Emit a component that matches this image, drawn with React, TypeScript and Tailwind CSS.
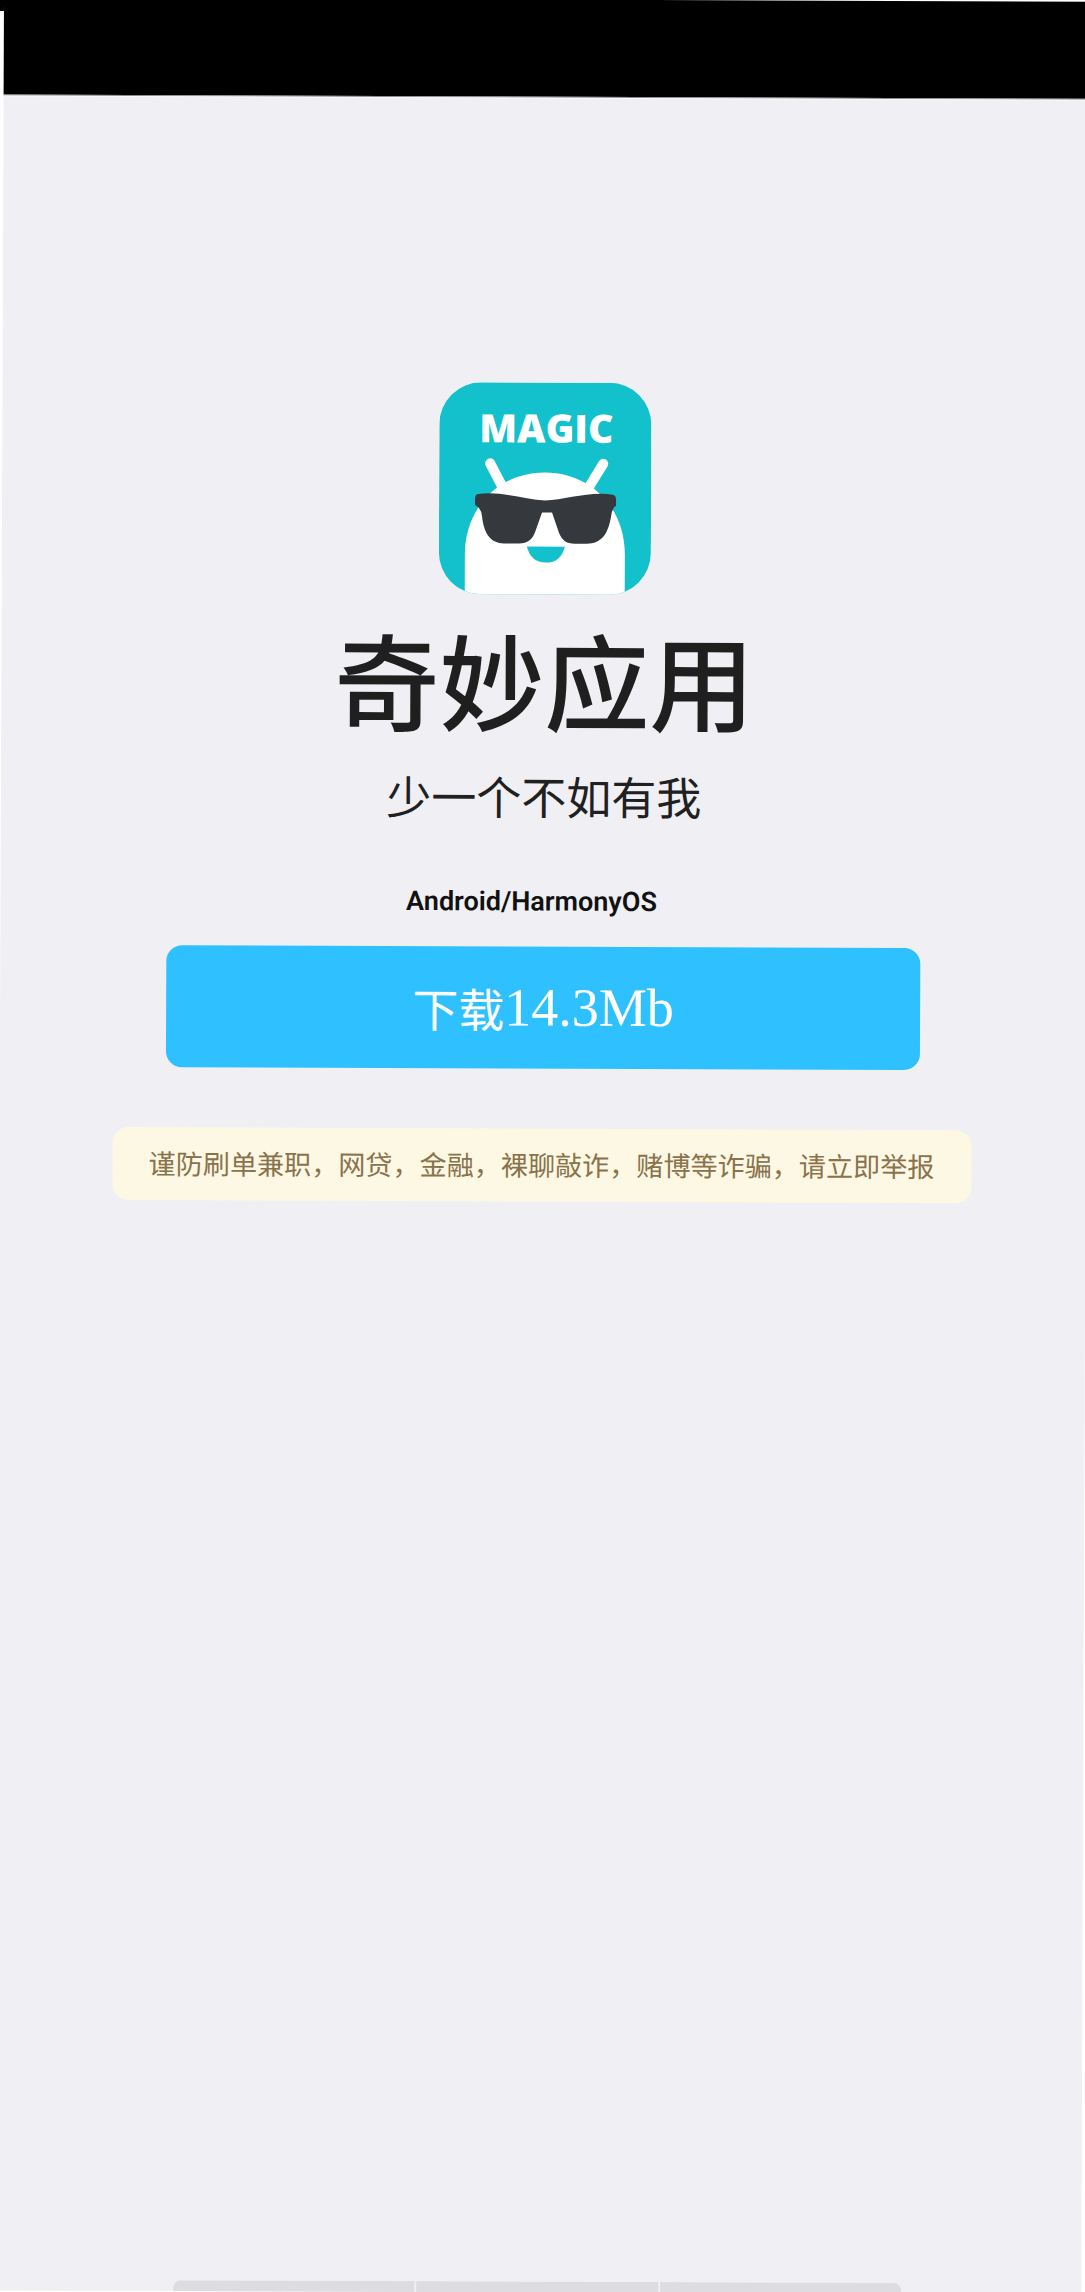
import React from "react";

// App icon: teal tile with the sunglasses robot
const MagicIcon = () => (
  <svg viewBox="0 0 212 212" className="h-[212px] w-[212px] rounded-[42px]">
    <rect width="212" height="212" fill="#13c1cd" />
    <text
      x="107"
      y="60"
      textAnchor="middle"
      fill="#ffffff"
      fontFamily="Open Sans, sans-serif"
      fontWeight="800"
      fontSize="39"
      textLength="134"
      lengthAdjust="spacingAndGlyphs"
    >
      MAGIC
    </text>
    <path d="M51 81 L63 104 M164 81 L150 104" stroke="#ffffff" strokeWidth="10" strokeLinecap="round" />
    <path d="M26 212 V172 C26 125 60 90 106 90 C152 90 186 125 186 172 V212 Z" fill="#ffffff" />
    <path
      d="M38 112 C60 108 85 117 106 118 C127 117 152 108 174 112 Q177 113 177 117 V123 Q173 125 172 134 C169 152 162 161 148 161 L136 161 C127 161 123 157 120 150 L113 130 H103 L96 150 C93 157 89 161 80 161 L65 161 C52 161 45 152 43 134 Q42 125 36 123 V117 Q36 113 38 112 Z"
      fill="#35383c"
    />
    <path d="M88 164 H126 Q122 180 107 180 Q92 180 88 164 Z" fill="#13c1cd" />
  </svg>
);

const App = () => {
  return (
    <div className="h-[2292px] w-[1085px] overflow-hidden bg-white relative">
      <div className="absolute left-0 top-0 h-[11px] w-[5px] bg-black" />
      <div className="flex h-[2293px] w-[1086px] origin-top-left translate-x-[4px] -translate-y-[2.5px] rotate-[0.22deg] flex-col items-center bg-[#efeff4]">
        <div className="h-[97px] w-full shrink-0 bg-black" />
        <div className="h-[1px] w-full shrink-0 bg-[#8a8a8a]" />
        <div className="h-[1px] w-full shrink-0 bg-[#f9f9fb]" />

        <div className="mt-[284px]">
          <MagicIcon />
        </div>

        <h1 className="mt-[23px] h-[120px] text-[105px] leading-[120px] font-medium text-[#1f1f1f] [font-family:'Noto_Sans_CJK_SC',sans-serif]">
          奇妙应用
        </h1>
        <p className="mt-[28px] h-[60px] text-[45px] leading-[60px] text-[#202020] [font-family:'Noto_Sans_CJK_SC',sans-serif]">
          少一个不如有我
        </p>
        <p className="mt-[59px] mr-[24px] h-[34px] text-[27px] leading-[34px] font-semibold text-[#111111] [font-family:Roboto,sans-serif]">
          Android/HarmonyOS
        </p>

        <button className="mt-[28px] flex h-[122px] w-[754px] shrink-0 items-center justify-center rounded-[16px] bg-[#2fc1ff] text-white">
          <span className="text-[46px] [font-family:'Noto_Sans_CJK_SC',sans-serif]">下载</span>
          <span className="text-[54px] [font-family:'Liberation_Serif',serif]">14.3Mb</span>
        </button>

        <div className="mt-[60px] mr-[2px] flex h-[73px] w-[859px] shrink-0 items-center justify-center rounded-[16px] bg-[#fdf8e4] text-[27.1px] text-[#8a734c] [font-family:'Noto_Sans_CJK_SC',sans-serif]">
          谨防刷单兼职，网贷，金融，裸聊敲诈，赌博等诈骗，请立即举报
        </div>

        {/* home bar strip at the very bottom */}
        <div className="mt-auto mr-[2px] flex h-[11px] w-[728px] shrink-0 gap-[2px] overflow-hidden rounded-t-[8px]">
          <div className="flex-1 bg-[#dcdce1]" />
          <div className="flex-1 bg-[#dcdce1]" />
          <div className="flex-1 bg-[#dcdce1]" />
        </div>
      </div>
    </div>
  );
};

export default App;
